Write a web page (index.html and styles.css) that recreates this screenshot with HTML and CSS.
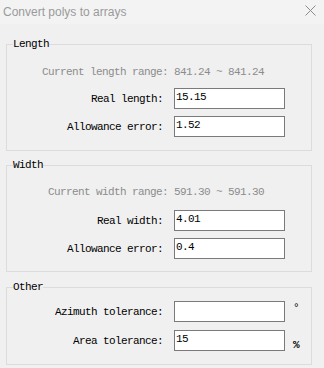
FILE: index.html
```html
<!DOCTYPE html>
<html>
<head>
  <title>Convert polys to arrays</title>
  <link rel="stylesheet" href="styles.css">
</head>
<body>
  <div class="titlebar">
    <span class="title">Convert polys to arrays</span>
    <svg class="close" width="11" height="11" viewBox="0 0 11 11">
      <path d="M0.5 0.5L10.5 10.5M10.5 0.5L0.5 10.5" stroke="#8c8c8c" stroke-width="1" fill="none"/>
    </svg>
  </div>

  <fieldset class="group group-length">
    <legend>Length</legend>
    <div class="range">Current length range: 841.24 ~ 841.24</div>
    <div class="field first">
      <label>Real length:</label>
      <input type="text" value="15.15">
      <span class="unit"></span>
    </div>
    <div class="field">
      <label>Allowance error:</label>
      <input type="text" value="1.52">
      <span class="unit"></span>
    </div>
  </fieldset>

  <fieldset class="group group-width">
    <legend>Width</legend>
    <div class="range">Current width range: 591.30 ~ 591.30</div>
    <div class="field first">
      <label>Real width:</label>
      <input type="text" value="4.01">
      <span class="unit"></span>
    </div>
    <div class="field">
      <label>Allowance error:</label>
      <input type="text" value="0.4">
      <span class="unit"></span>
    </div>
  </fieldset>

  <fieldset class="group group-other">
    <legend>Other</legend>
    <div class="field first">
      <label>Azimuth tolerance:</label>
      <input type="text" value="">
      <span class="unit degree">°</span>
    </div>
    <div class="field">
      <label>Area tolerance:</label>
      <input type="text" value="15">
      <span class="unit percent">%</span>
    </div>
  </fieldset>
</body>
</html>
```

FILE: styles.css
```css
body {
  margin: 0;
  width: 324px;
  height: 368px;
  overflow: hidden;
  background-color: #f0f0f0;
  font-family: "Liberation Mono", "DejaVu Sans Mono", monospace;
  font-size: 11px;
  letter-spacing: -0.6px;
  color: #000;
}
.titlebar {
  height: 24px;
  display: flex;
  align-items: center;
  justify-content: space-between;
  padding: 0 8px 0 3px;
  background-color: #f3f3f3;
  font-family: "Liberation Sans", Arial, sans-serif;
  font-size: 12px;
  letter-spacing: 0;
  color: #9a9a9a;
}
.close {
  margin-top: -3px;
}
.group {
  margin: 14px 12px 0 6px;
  padding: 0 0 13px 0;
  border: 1px solid #dcdcdc;
  min-width: 0;
}
.group legend {
  margin-left: 6px;
  padding: 0;
  height: 13px;
  line-height: 13px;
}
.group-width {
  margin-top: 8px;
  padding-bottom: 12px;
}
.group-other {
  margin-top: 9px;
}
.range {
  margin-top: 14px;
  line-height: 14px;
  text-align: right;
  padding-right: 47px;
  color: #8c8c8c;
}
.group-width .range {
  margin-top: 13px;
}
.field {
  display: grid;
  grid-template-columns: 156px 111px auto;
  column-gap: 11px;
  align-items: center;
  margin-top: 7px;
}
.field.first {
  margin-top: 9px;
}
.group-width .field.first {
  margin-top: 11px;
}
.group-other .field.first {
  margin-top: 7px;
}
.group-other .field {
  margin-top: 8px;
}
.field label {
  text-align: right;
}
.field input {
  box-sizing: border-box;
  width: 111px;
  height: 21px;
  margin: 0;
  padding: 1px 1px 5px 1px;
  border: 1px solid #7a7a7a;
  border-radius: 0;
  background-color: #fff;
  outline: none;
  font-family: "Liberation Mono", "DejaVu Sans Mono", monospace;
  font-size: 11px;
  letter-spacing: -0.6px;
  color: #000;
}
.unit {
  margin-left: -3px;
  font-size: 11px;
}
.degree {
  align-self: start;
  margin-top: 1px;
}
.percent {
  align-self: end;
  font-weight: bold;
  letter-spacing: 0;
}
```
